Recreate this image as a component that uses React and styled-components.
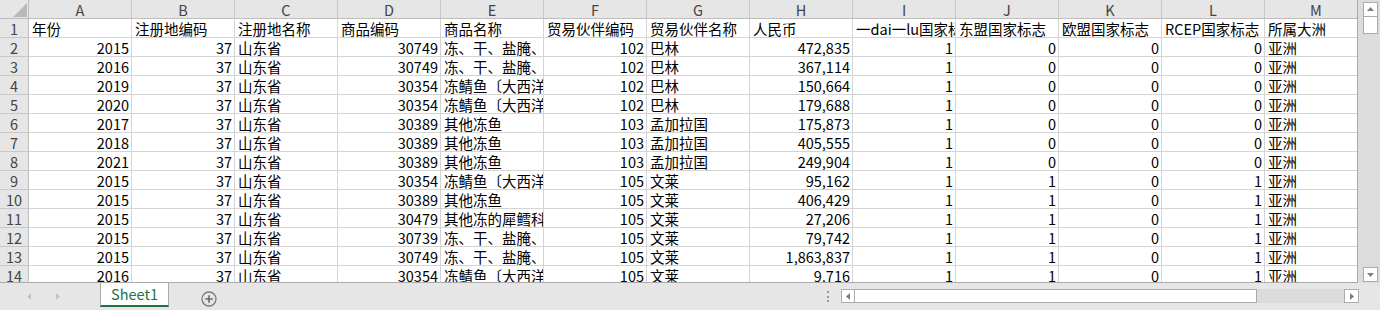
import React from 'react';
import styled, { createGlobalStyle } from "styled-components";

const GlobalStyle = createGlobalStyle`
  html, body {
    margin: 0;
    padding: 0;
    background: #e6e6e6;
  }
  body {
    font-family: "Noto Sans CJK SC", "Liberation Sans", sans-serif;
  }
`;

const COL_W = 103;
const letters = ['A', 'B', 'C', 'D', 'E', 'F', 'G', 'H', 'I', 'J', 'K', 'L', 'M'];
const numeric = [true, true, false, true, false, true, false, true, true, true, true, true, false];

const header = ['年份', '注册地编码', '注册地名称', '商品编码', '商品名称', '贸易伙伴编码', '贸易伙伴名称', '人民币',
    '一dai一lu国家标志', '东盟国家标志', '欧盟国家标志', 'RCEP国家标志', '所属大洲'];

const rows = [
    ['2015', '37', '山东省', '30749', '冻、干、盐腌、熏制的鱼', '102', '巴林', '472,835', '1', '0', '0', '0', '亚洲'],
    ['2016', '37', '山东省', '30749', '冻、干、盐腌、熏制的鱼', '102', '巴林', '367,114', '1', '0', '0', '0', '亚洲'],
    ['2019', '37', '山东省', '30354', '冻鲭鱼〔大西洋鲭鱼〕', '102', '巴林', '150,664', '1', '0', '0', '0', '亚洲'],
    ['2020', '37', '山东省', '30354', '冻鲭鱼〔大西洋鲭鱼〕', '102', '巴林', '179,688', '1', '0', '0', '0', '亚洲'],
    ['2017', '37', '山东省', '30389', '其他冻鱼', '103', '孟加拉国', '175,873', '1', '0', '0', '0', '亚洲'],
    ['2018', '37', '山东省', '30389', '其他冻鱼', '103', '孟加拉国', '405,555', '1', '0', '0', '0', '亚洲'],
    ['2021', '37', '山东省', '30389', '其他冻鱼', '103', '孟加拉国', '249,904', '1', '0', '0', '0', '亚洲'],
    ['2015', '37', '山东省', '30354', '冻鲭鱼〔大西洋鲭鱼〕', '105', '文莱', '95,162', '1', '1', '0', '1', '亚洲'],
    ['2015', '37', '山东省', '30389', '其他冻鱼', '105', '文莱', '406,429', '1', '1', '0', '1', '亚洲'],
    ['2015', '37', '山东省', '30479', '其他冻的犀鳕科鱼', '105', '文莱', '27,206', '1', '1', '0', '1', '亚洲'],
    ['2015', '37', '山东省', '30739', '冻、干、盐腌、熏制的鱼', '105', '文莱', '79,742', '1', '1', '0', '1', '亚洲'],
    ['2015', '37', '山东省', '30749', '冻、干、盐腌、熏制的鱼', '105', '文莱', '1,863,837', '1', '1', '0', '1', '亚洲'],
    ['2016', '37', '山东省', '30354', '冻鲭鱼〔大西洋鲭鱼〕', '105', '文莱', '9,716', '1', '1', '0', '1', '亚洲'],
];

const Window = styled.div`
  width: 1380px;
  height: 310px;
  display: flex;
  flex-direction: column;
  background: #e6e6e6;
  overflow: hidden;
`;

const Workspace = styled.div`
  height: 283px;
  display: flex;
`;

const Sheet = styled.div`
  width: 1358px;
  height: 283px;
  box-sizing: border-box;
  border-right: 1px solid #ababab;
  border-bottom: 1px solid #ababab;
  background: #fff;
  overflow: hidden;
`;

const Grid = styled.div`
  display: grid;
  grid-template-columns: 29px repeat(13, ${COL_W}px);
  grid-auto-rows: 19px;
  width: max-content;
`;

const Corner = styled.div`
  background: #e6e6e6;
  border-right: 1px solid #bdbdbd;
  border-bottom: 1px solid #bdbdbd;
  box-sizing: border-box;
  display: flex;
  align-items: flex-end;
  justify-content: flex-end;
  padding: 0 1px 1px 0;
`;

const ColHead = styled.div`
  background: #e6e6e6;
  border-right: 1px solid #c8c8c8;
  border-bottom: 1px solid #bdbdbd;
  box-sizing: border-box;
  color: #444;
  font-size: 14.5px;
  line-height: 19px;
  text-align: center;
`;

const RowHead = styled(ColHead)`
  border-right: 1px solid #bdbdbd;
  border-bottom: 1px solid #c8c8c8;
`;

const Cell = styled.div`
  border-right: 1px solid #d4d4d4;
  border-bottom: 1px solid #d4d4d4;
  box-sizing: border-box;
  padding: 0 2px 0 3px;
  color: #000;
  font-size: 14.5px;
  line-height: 19px;
  white-space: nowrap;
  overflow: hidden;
  text-align: ${p => (p.$num ? 'right' : 'left')};
`;

const VScroll = styled.div`
  flex: 1;
  display: flex;
  flex-direction: column;
  align-items: center;
  padding: 2px 0 1px 2px;
  box-sizing: border-box;
  background: #dcdcdc;
`;

const ScrollBtn = styled.div`
  width: 15px;
  height: 15px;
  box-sizing: border-box;
  border: 1px solid #ababab;
  background: #fff;
  display: flex;
  align-items: center;
  justify-content: center;
  flex-shrink: 0;
`;

const VThumb = styled.div`
  width: 15px;
  height: 17px;
  box-sizing: border-box;
  border: 1px solid #ababab;
  border-top: none;
  background: #fff;
`;

const Spacer = styled.div`
  flex: 1;
`;

const TabBar = styled.div`
  flex: 1;
  display: flex;
  align-items: flex-start;
  background: #e6e6e6;
`;

const NavArrows = styled.div`
  width: 100px;
  height: 26px;
  display: flex;
  align-items: center;
  padding-left: 26px;
  gap: 21px;
  box-sizing: border-box;
`;

const SheetTab = styled.div`
  width: 69px;
  height: 24px;
  box-sizing: border-box;
  background: #fff;
  border-left: 1px solid #ababab;
  border-right: 1px solid #ababab;
  border-bottom: 2px solid #217346;
  color: #217346;
  font-size: 14.5px;
  line-height: 21px;
  text-align: center;
`;

const AddSheet = styled.div`
  margin-left: 32px;
  margin-top: 5px;
  width: 16px;
  height: 16px;
`;

const Splitter = styled.div`
  margin-left: 609px;
  margin-top: 8px;
  width: 3px;
  height: 11px;
  display: flex;
  flex-direction: column;
  justify-content: space-between;
  align-items: center;
  & > span {
    width: 2px;
    height: 2px;
    background: #9a9a9a;
  }
`;

const HScroll = styled.div`
  margin-left: 12px;
  margin-top: 6px;
  width: 518px;
  height: 14px;
  display: flex;
  background: #dcdcdc;
`;

const HBtn = styled(ScrollBtn)`
  width: ${p => p.$w}px;
  height: 14px;
`;

const HThumb = styled.div`
  width: 402px;
  height: 14px;
  box-sizing: border-box;
  border: 1px solid #ababab;
  border-left: none;
  background: #fff;
`;

const Tri = ({ dir, color = '#7f7f7f', size = 7 }) => {
    const paths = {
        up: 'M0 5 L3.5 1 L7 5 Z',
        down: 'M0 2 L3.5 6 L7 2 Z',
        left: 'M5 0 L1 3.5 L5 7 Z',
        right: 'M2 0 L6 3.5 L2 7 Z',
    };
    return (
        <svg width={size} height={size} viewBox="0 0 7 7">
            <path d={paths[dir]} fill={color} />
        </svg>
    );
};

export default function App() {
    return (
        <Window>
            <GlobalStyle />
            <Workspace>
                <Sheet>
                    <Grid>
                        <Corner>
                            <svg width="14" height="14" viewBox="0 0 14 14">
                                <path d="M14 0 L14 14 L0 14 Z" fill="#b9b9b9" />
                            </svg>
                        </Corner>
                        {letters.map(l => <ColHead key={l}>{l}</ColHead>)}
                        <RowHead>1</RowHead>
                        {header.map((h, i) => <Cell key={i}>{h}</Cell>)}
                        {rows.map((r, ri) => (
                            <React.Fragment key={ri}>
                                <RowHead>{ri + 2}</RowHead>
                                {r.map((v, ci) => <Cell key={ci} $num={numeric[ci]}>{v}</Cell>)}
                            </React.Fragment>
                        ))}
                    </Grid>
                </Sheet>
                <VScroll>
                    <ScrollBtn><Tri dir="up" /></ScrollBtn>
                    <VThumb />
                    <Spacer />
                    <ScrollBtn><Tri dir="down" /></ScrollBtn>
                </VScroll>
            </Workspace>
            <TabBar>
                <NavArrows>
                    <Tri dir="left" color="#c4c4c4" />
                    <Tri dir="right" color="#c4c4c4" />
                </NavArrows>
                <SheetTab>Sheet1</SheetTab>
                <AddSheet>
                    <svg width="16" height="16" viewBox="0 0 16 16">
                        <circle cx="8" cy="8" r="7" fill="none" stroke="#7a7a7a" strokeWidth="1.3" />
                        <path d="M8 4.3 V11.7 M4.3 8 H11.7" stroke="#6a6a6a" strokeWidth="1.6" />
                    </svg>
                </AddSheet>
                <Splitter><span /><span /><span /></Splitter>
                <HScroll>
                    <HBtn $w={14}><Tri dir="left" /></HBtn>
                    <HThumb />
                    <Spacer />
                    <HBtn $w={15}><Tri dir="right" /></HBtn>
                </HScroll>
            </TabBar>
        </Window>
    );
}
